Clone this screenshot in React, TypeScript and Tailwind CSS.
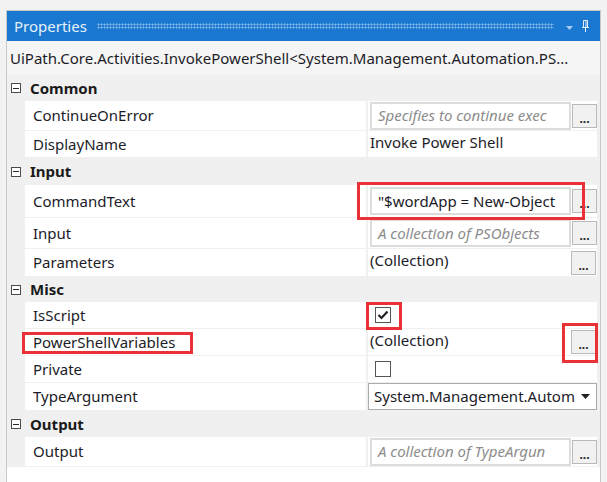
import React from 'react';

function MinusBox() {
  return (
    <div className="w-[10px] h-[10px] border border-[#4a4a4a] bg-white flex items-center justify-center">
      <div className="w-[6px] h-px bg-[#2a2a2a]" />
    </div>
  );
}

function Category({ label, h }: { label: string; h: string }) {
  return (
    <div className={`flex items-center bg-[#f0f0f0] ${h}`}>
      <div className="ml-[4px]">
        <MinusBox />
      </div>
      <span className="ml-[9px] font-bold text-[15px] text-[#1a1a1a]">{label}</span>
    </div>
  );
}

function Row({ name, h, children }: { name: string; h: string; children?: React.ReactNode }) {
  return (
    <div className={`flex gap-[2px] pl-[18px] pr-[3px] pb-px bg-[#f0f0f0] ${h}`}>
      <div className="w-[341px] bg-white flex items-center pl-[8px] text-[15px] text-[#1c1c28]">{name}</div>
      <div className="w-[229px] bg-white relative">{children}</div>
    </div>
  );
}

function Dots() {
  return (
    <div className="flex items-center justify-center w-[25px] h-[24px] shrink-0 border border-[#b9b9b9] bg-[#f1f1f1] text-[12px] font-bold leading-none text-[#222] pt-[6px]">
      ...
    </div>
  );
}

function TextBox({ text, placeholder }: { text?: string; placeholder?: string }) {
  return (
    <div className="flex items-center h-full pl-[2px] gap-px">
      <div className="w-[201px] h-[28px] shrink-0 border-2 border-[#dcdcdc] bg-white flex items-center pl-[6px] overflow-hidden whitespace-nowrap text-[15px]">
        {text ? (
          <span className="text-[#1c1c28]">{text}</span>
        ) : (
          <span className="italic text-[#8c8c8c]">{placeholder}</span>
        )}
      </div>
      <Dots />
    </div>
  );
}

function Collection() {
  return (
    <div className="flex justify-between h-full pl-[2px] pr-px">
      <span className="text-[15px] text-[#1c1c28] leading-none pt-[4px]">(Collection)</span>
      <div className="self-end pb-[1px]">
        <Dots />
      </div>
    </div>
  );
}

function Check({ checked }: { checked?: boolean }) {
  return (
    <div className="flex items-center h-full pl-[7px]">
      <div className="w-[16px] h-[16px] border border-[#555] bg-white flex items-center justify-center">
        {checked && (
          <svg width="12" height="10" viewBox="0 0 12 10">
            <path d="M1.5 5 L4.5 8 L10.5 1.5" fill="none" stroke="#222" strokeWidth="2.2" />
          </svg>
        )}
      </div>
    </div>
  );
}

function Dropdown() {
  return (
    <div className="flex items-center h-full">
      <div className="w-[229px] h-[27px] border border-[#acacac] bg-white flex items-center pl-[5px] pr-[6px]">
        <span className="flex-1 overflow-hidden whitespace-nowrap text-[15px] text-[#1c1c28]">System.Management.Autom</span>
        <svg width="9" height="5" viewBox="0 0 9 5" className="ml-[4px]">
          <path d="M0 0 H9 L4.5 5 Z" fill="#222" />
        </svg>
      </div>
    </div>
  );
}

function RedBox({ cls }: { cls: string }) {
  return <div className={`absolute border-[3px] border-[#ea3138] pointer-events-none ${cls}`} />;
}

export default function App() {
  return (
    <div className="relative w-[607px] h-[482px] overflow-hidden bg-[#f2f2f2] pt-[10px] pl-[6px] pr-[6px] font-['Noto_Sans',sans-serif]">
      <div className="h-[480px] border border-[#c8c8c8] bg-white flex flex-col">
        <div className="h-[30px] shrink-0 bg-[#1b78d0] flex items-center pl-[7px] pr-[11px]">
          <span className="text-[15px] text-[#e6f0fa] leading-none">Properties</span>
          <div className="flex-1 h-[6px] ml-[10px] mr-[12px] bg-[radial-gradient(circle,#7fb3e8_0.9px,transparent_1.2px)] bg-[length:3px_3px]" />
          <svg width="7" height="4" viewBox="0 0 7 4" className="mr-[9px] mt-[3px]">
            <path d="M0 0 H7 L3.5 4 Z" fill="#a9cdf0" />
          </svg>
          <svg width="7" height="12" viewBox="0 0 7 12">
            <path d="M1.5 0.5 H5.5 V7.5 H1.5 Z M0 7.5 H7 M3.5 7.5 V12" fill="none" stroke="#e6f0fa" strokeWidth="1" />
            <path d="M4 1 V7" stroke="#e6f0fa" strokeWidth="1" />
          </svg>
        </div>
        <div className="h-[34px] shrink-0 bg-[#f5f5f5] flex items-center pl-[3px] text-[15px] text-[#1c1c28] whitespace-nowrap">
          UiPath.Core.Activities.InvokePowerShell&lt;System.Management.Automation.PS...
        </div>

        <Category label="Common" h="h-[26px]" />
        <Row name="ContinueOnError" h="h-[30px]">
          <TextBox placeholder="Specifies to continue exec" />
        </Row>
        <Row name="DisplayName" h="h-[27px]">
          <div className="pl-[2px] pt-[4px] text-[15px] leading-none text-[#1c1c28]">Invoke Power Shell</div>
        </Row>

        <Category label="Input" h="h-[27px]" />
        <Row name="CommandText" h="h-[33px]">
          <TextBox text={'"$wordApp = New-Object'} />
        </Row>
        <Row name="Input" h="h-[31px]">
          <TextBox placeholder="A collection of PSObjects" />
        </Row>
        <Row name="Parameters" h="h-[28px]">
          <Collection />
        </Row>

        <Category label="Misc" h="h-[25px]" />
        <Row name="IsScript" h="h-[27px]">
          <Check checked />
        </Row>
        <Row name="PowerShellVariables" h="h-[27px]">
          <Collection />
        </Row>
        <Row name="Private" h="h-[27px]">
          <Check />
        </Row>
        <Row name="TypeArgument" h="h-[28px]">
          <Dropdown />
        </Row>

        <Category label="Output" h="h-[26px]" />
        <Row name="Output" h="h-[30px]">
          <TextBox placeholder="A collection of TypeArgun" />
        </Row>
        <div className="flex-1 bg-white" />
      </div>

      <RedBox cls="left-[357px] top-[182px] w-[228px] h-[38px]" />
      <RedBox cls="left-[366px] top-[302px] w-[36px] h-[28px]" />
      <RedBox cls="left-[22px] top-[332px] w-[171px] h-[22px]" />
      <RedBox cls="left-[562px] top-[323px] w-[36px] h-[40px]" />
    </div>
  );
}
